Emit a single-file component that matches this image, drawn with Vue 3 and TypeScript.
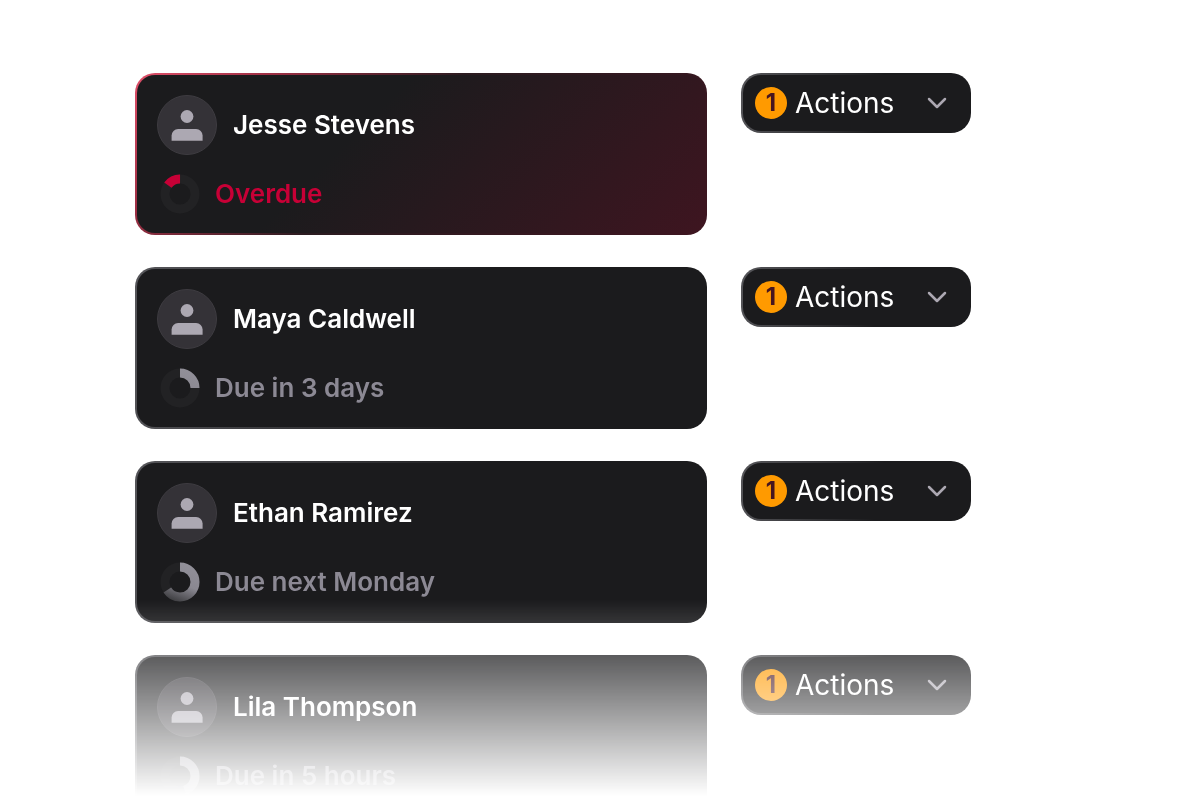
<script setup lang="ts">
interface Task {
  id: number
  name: string
  status: string
  progress: number
  overdue?: boolean
  actions: number
}

const tasks: Task[] = [
  { id: 1, name: 'Jesse Stevens', status: 'Overdue', progress: 15, overdue: true, actions: 1 },
  { id: 2, name: 'Maya Caldwell', status: 'Due in 3 days', progress: 25, actions: 1 },
  { id: 3, name: 'Ethan Ramirez', status: 'Due next Monday', progress: 66, actions: 1 },
  { id: 4, name: 'Lila Thompson', status: 'Due in 5 hours', progress: 45, actions: 1 },
]

// Overdue arcs end at twelve o'clock, all others start there.
const arcRotation = (task: Task): string => {
  const start = task.overdue ? -90 - task.progress * 3.6 : -90
  return `rotate(${start} 20 20)`
}
</script>

<template>
  <main class="page">
    <ul class="list">
      <li v-for="task in tasks" :key="task.id" class="row">
        <article class="card" :class="{ overdue: task.overdue }">
          <div class="person">
            <svg class="avatar" viewBox="0 0 60 60" aria-hidden="true">
              <circle class="avatar-disc" cx="30" cy="30" r="29.5" />
              <circle class="avatar-glyph" cx="30" cy="21.5" r="6.4" />
              <path class="avatar-glyph" d="M14.6 45.8V40.5a6.5 6.5 0 0 1 6.5-6.5h18a6.5 6.5 0 0 1 6.5 6.5v5.3Z" />
            </svg>
            <h2 class="name">{{ task.name }}</h2>
          </div>
          <div class="status">
            <svg class="ring" viewBox="0 0 40 40" aria-hidden="true">
              <defs>
                <!-- Coordinates are in the arc's own frame, a quarter turn from the screen. -->
                <linearGradient :id="`arc-${task.id}`" gradientUnits="userSpaceOnUse" x1="38" y1="24" x2="2" y2="10">
                  <stop offset="0" stop-color="#918f98" />
                  <stop offset="0.5" stop-color="#8a8891" />
                  <stop offset="1" stop-color="#3c3c3f" />
                </linearGradient>
              </defs>
              <circle class="ring-track" cx="20" cy="20" r="15" />
              <circle
                class="ring-arc"
                cx="20"
                cy="20"
                r="15"
                pathLength="100"
                :stroke="task.overdue ? '#c70036' : `url(#arc-${task.id})`"
                :stroke-dasharray="`${task.progress} 100`"
                :transform="arcRotation(task)"
              />
            </svg>
            <p class="status-text">{{ task.status }}</p>
          </div>
        </article>
        <button type="button" class="actions" aria-haspopup="menu">
          <span class="count">{{ task.actions }}</span>
          <span class="label">Actions</span>
          <svg class="chevron" viewBox="0 0 20 12" aria-hidden="true">
            <path d="M2 2l8 8 8-8" />
          </svg>
        </button>
      </li>
    </ul>
  </main>
</template>

<style>
body {
  background: #fff;
}
</style>

<style scoped>
.page {
  box-sizing: border-box;
  height: 100vh;
  overflow: hidden;
  padding: 73px 229px 0 135px;
  font-family: Inter, 'Liberation Sans', sans-serif;
  mask-image: linear-gradient(#000 75%, transparent 99.5%);
}

.list {
  display: flex;
  flex-direction: column;
  gap: 32px;
  margin: 0;
  padding: 0;
  list-style: none;
}

.row {
  display: grid;
  grid-template-columns: minmax(0, 1fr) 230px;
  gap: 34px;
  align-items: start;
}

.card {
  display: flex;
  flex-direction: column;
  gap: 19px;
  padding: 20px 20px 19px;
  border: 2px solid transparent;
  border-radius: 20px;
  background:
    linear-gradient(#1b1b1d, #1b1b1d) padding-box,
    linear-gradient(100deg, #56565a, #1b1b1d 60%) border-box;
}

.card.overdue {
  background:
    linear-gradient(135deg, #1b1b1d 38%, #3e1520) padding-box,
    linear-gradient(135deg, #e0506a, #a03045 18%, #2b1b20 45%, #3e1520) border-box;
}

.person,
.status {
  display: flex;
  align-items: center;
}

.person {
  gap: 16px;
}

.status {
  gap: 15px;
  padding: 0 0 0 3px;
}

.avatar {
  flex: none;
  width: 60px;
  height: 60px;
}

.avatar-disc {
  fill: #343237;
  stroke: #3e3c41;
}

.avatar-glyph {
  fill: #aca8b2;
}

.name {
  margin: 0;
  color: #fff;
  font-size: 26px;
  font-weight: 600;
  line-height: 32px;
}

.ring {
  flex: none;
  width: 40px;
  height: 40px;
}

.ring-track,
.ring-arc {
  fill: none;
  stroke-width: 9;
}

.ring-track {
  stroke: #222224;
}

.status-text {
  margin: 0;
  color: #8c8994;
  font-size: 26px;
  font-weight: 600;
  line-height: 32px;
}

.overdue .status-text {
  color: #c70036;
}

.actions {
  display: flex;
  align-items: center;
  gap: 8px;
  height: 60px;
  padding: 0 22px 0 12px;
  border: 2px solid transparent;
  border-radius: 20px;
  background:
    linear-gradient(#1b1b1d, #1b1b1d) padding-box,
    linear-gradient(100deg, #56565a, #1b1b1d 60%) border-box;
  color: #fff;
  font: 400 28px/34px Inter, 'Liberation Sans', sans-serif;
  cursor: pointer;
}

.count {
  display: flex;
  align-items: center;
  justify-content: center;
  width: 32px;
  height: 32px;
  border-radius: 50%;
  background: #ff9a00;
  color: #461520;
  font-size: 24px;
  font-weight: 700;
}

.chevron {
  width: 20px;
  height: 12px;
  margin-left: auto;
  fill: none;
  stroke: #aca8b2;
  stroke-width: 2.5;
  stroke-linecap: round;
  stroke-linejoin: round;
}
</style>
